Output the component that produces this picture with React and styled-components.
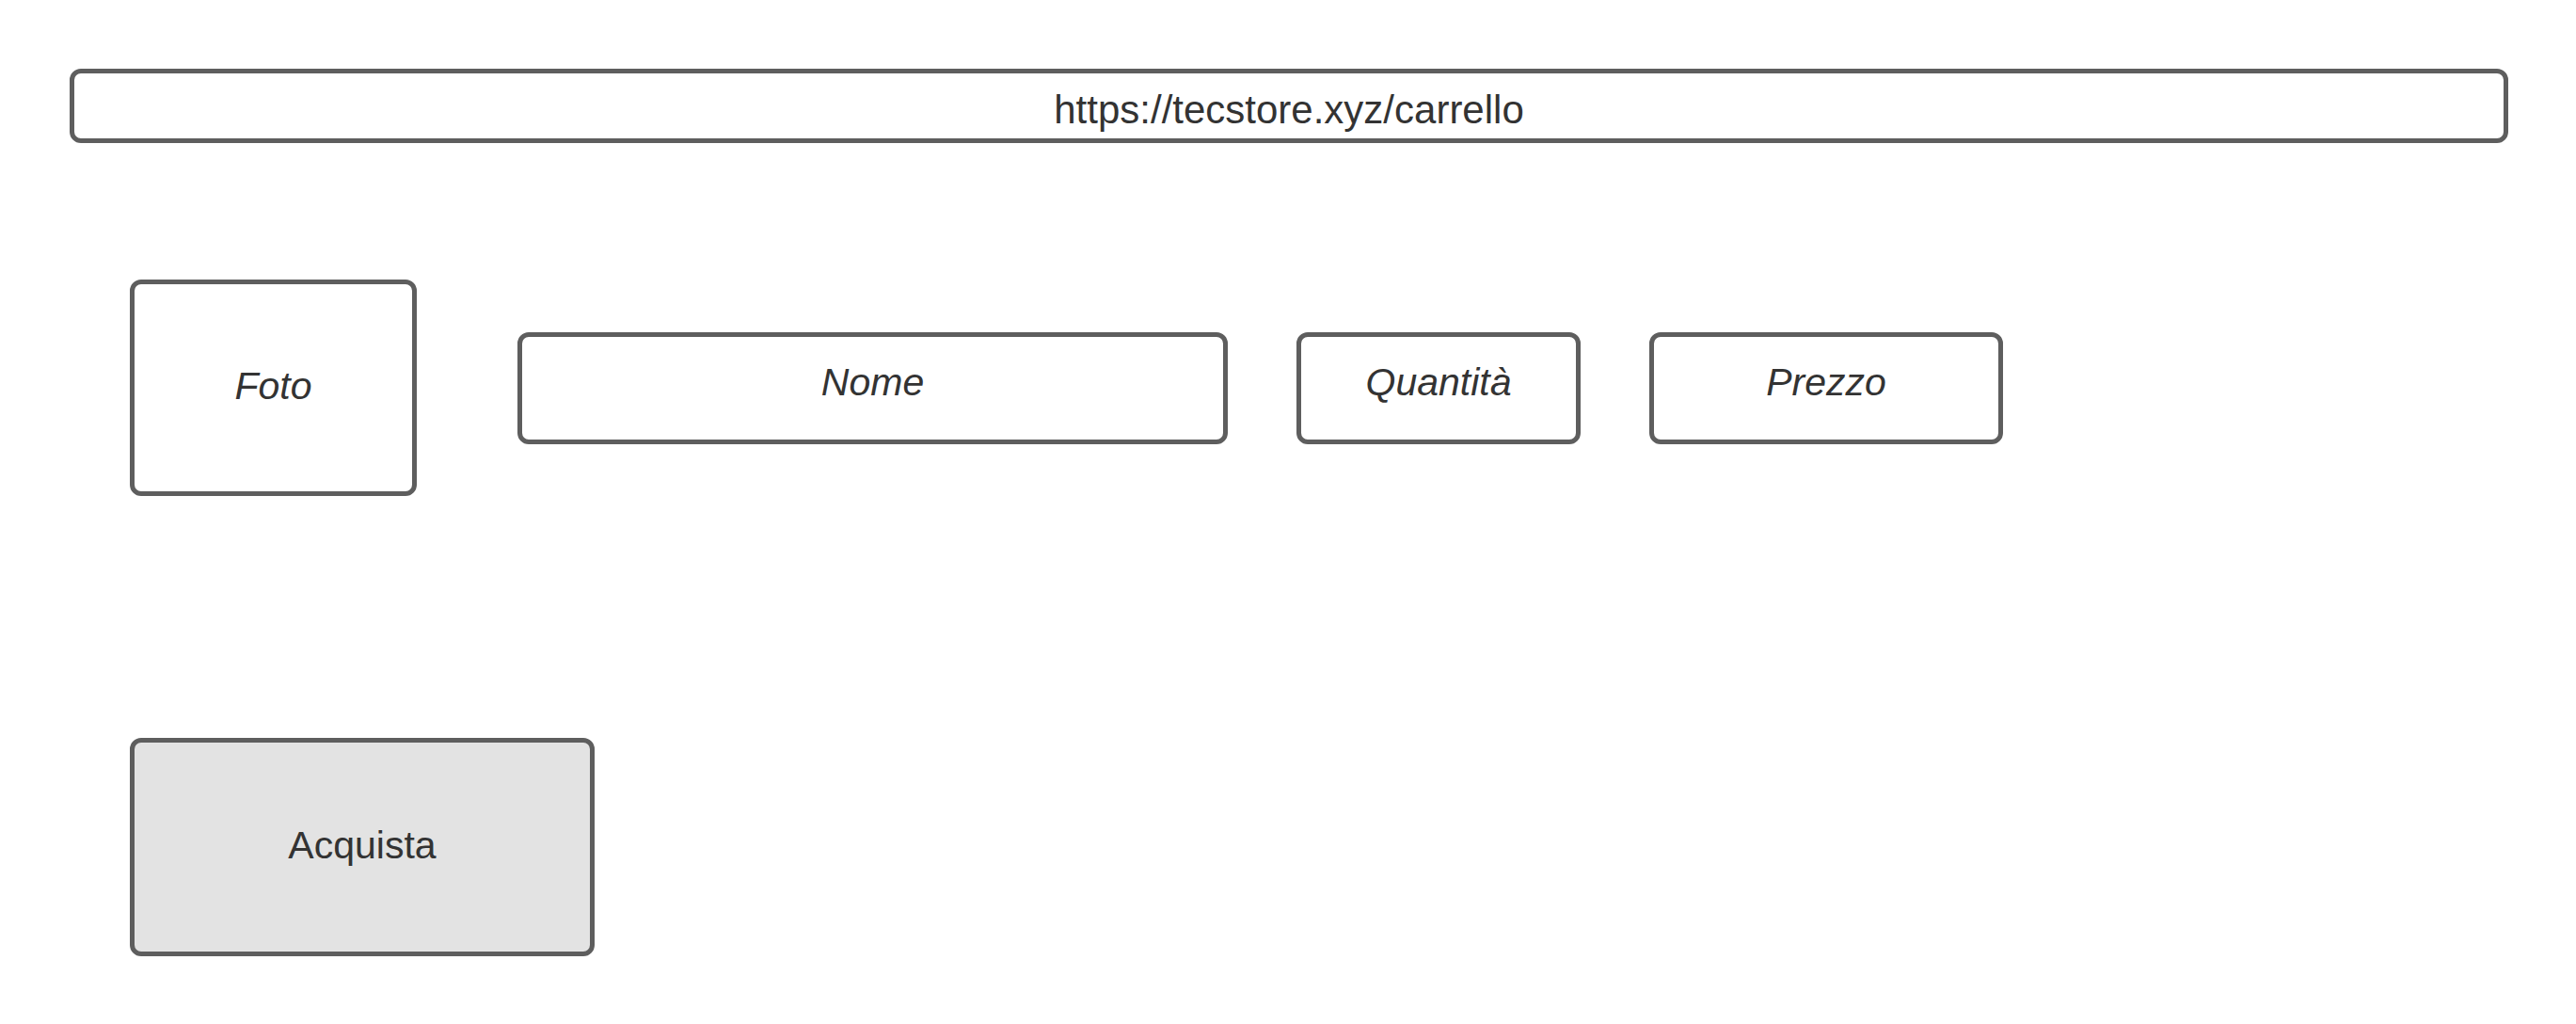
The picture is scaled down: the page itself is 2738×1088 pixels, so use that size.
import styled, { createGlobalStyle } from 'styled-components';

const GlobalStyle = createGlobalStyle`
  html, body {
    margin: 0;
    padding: 0;
    background: #ffffff;
  }
  body {
    font-family: "Liberation Sans", Arial, sans-serif;
    color: #333333;
  }
`;

const Page = styled.main`
  display: flex;
  flex-direction: column;
  align-items: flex-start;
  padding: 73px 0 0 74px;
`;

const AddressBar = styled.div`
  box-sizing: border-box;
  width: 2592px;
  height: 79px;
  display: flex;
  align-items: center;
  justify-content: center;
  padding-top: 8px;
  border: 5px solid #5e5e5e;
  border-radius: 12px;
  font-size: 42px;
  color: #333333;
`;

const CartRow = styled.section`
  display: flex;
  align-items: center;
  margin-top: 145px;
  margin-left: 64px;
`;

const Cell = styled.div`
  box-sizing: border-box;
  display: flex;
  align-items: center;
  justify-content: center;
  width: ${(p) => p.$w}px;
  height: ${(p) => p.$h}px;
  margin-left: ${(p) => p.$gap || 0}px;
  padding-bottom: ${(p) => p.$lift || 0}px;
  border: 5px solid #5e5e5e;
  border-radius: 12px;
  font-size: 41px;
  font-style: italic;
  color: #333333;
  background: #ffffff;
`;

const BuyButton = styled.button`
  box-sizing: border-box;
  width: 494px;
  height: 232px;
  margin-top: 257px;
  margin-left: 64px;
  padding: 0 0 4px;
  border: 5px solid #5e5e5e;
  border-radius: 12px;
  background: #e3e3e3;
  font-family: "Liberation Sans", Arial, sans-serif;
  font-size: 41px;
  color: #333333;
  cursor: pointer;
`;

export default function App() {
  return (
    <>
      <GlobalStyle />
      <Page>
        <AddressBar>https://tecstore.xyz/carrello</AddressBar>
        <CartRow>
          <Cell $w={305} $h={230} $lift={4}>Foto</Cell>
          <Cell $w={755} $h={119} $gap={107} $lift={12}>Nome</Cell>
          <Cell $w={302} $h={119} $gap={73} $lift={12}>Quantità</Cell>
          <Cell $w={376} $h={119} $gap={73} $lift={12}>Prezzo</Cell>
        </CartRow>
        <BuyButton type="button">Acquista</BuyButton>
      </Page>
    </>
  );
}
